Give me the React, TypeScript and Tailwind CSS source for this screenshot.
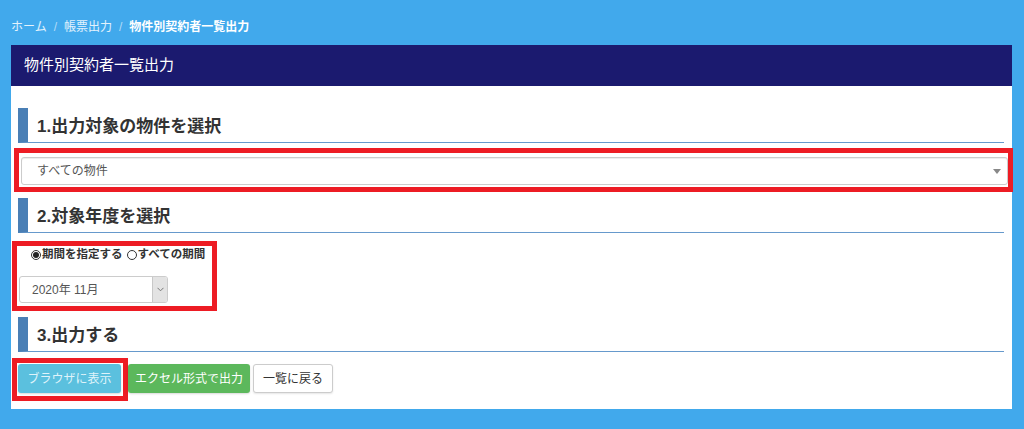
import React from 'react';

const font = "font-['Liberation_Sans','Noto_Sans_CJK_JP',sans-serif]";

const Heading: React.FC<{ children: React.ReactNode; className?: string }> = ({ children, className }) => (
  <div
    className={`h-[35px] border-l-[10px] border-l-[#4a7fb5] border-b border-b-[#6699cc] flex items-center pl-[9px] pt-[3px] text-[17px] font-bold text-[#333] ${className ?? ''}`}
  >
    {children}
  </div>
);

const Radio: React.FC<{ checked?: boolean }> = ({ checked }) => (
  <span className="w-[10px] h-[10px] rounded-full border border-[#333] flex items-center justify-center mr-[1px]">
    {checked && <span className="w-[6px] h-[6px] rounded-full bg-[#222]" />}
  </span>
);

const App: React.FC = () => {
  return (
    <div className={`w-[1024px] h-[429px] bg-[#41a9ec] pl-[11px] pr-[12px] overflow-hidden ${font}`}>
      {/* パンくず */}
      <div className="h-[45px] pt-[20px] text-[12px] leading-[14px] text-white/85 flex items-start">
        <span>ホーム</span>
        <span className="px-[7px] text-white/60">/</span>
        <span>帳票出力</span>
        <span className="px-[7px] text-white/60">/</span>
        <span className="font-bold text-white">物件別契約者一覧出力</span>
      </div>

      <div className="bg-white">
        <div className="h-[41px] bg-[#1b1a6f] flex items-center px-[13px] text-[15px] text-white">
          物件別契約者一覧出力
        </div>

        <div className="pl-[7px] pr-[8px] pt-[22px] pb-[8px]">
          <Heading>1.出力対象の物件を選択</Heading>

          <div className="mt-[5px] -ml-[4px] -mr-[9px] border-[5px] border-[#ed1c24] pt-[4px] pl-[2px] pb-[2px]">
            <div className="h-[28px] border border-[#ccc] rounded-[3px] shadow-[inset_0_1px_1px_rgba(0,0,0,0.075)] flex items-center justify-between pl-[15px] pr-[6px] text-[12px] text-[#555]">
              <span>すべての物件</span>
              <svg width="8" height="5" viewBox="0 0 8 5">
                <path d="M0 0 L8 0 L4 5 Z" fill="#888" />
              </svg>
            </div>
          </div>

          <Heading className="mt-[6px]">2.対象年度を選択</Heading>

          <div className="mt-[8px] -ml-[6px] w-[205px] border-[5px] border-[#ed1c24] pl-[2px] pt-[2px] pb-[3px]">
            <div className="h-[13px] flex items-center pl-[12px] text-[11.5px] font-bold text-[#333] leading-none">
              <Radio checked />
              <span>期間を指定する</span>
              <span className="w-[4px]" />
              <Radio />
              <span>すべての期間</span>
            </div>
            <div className="mt-[15px] w-[149px] h-[27px] border border-[#ccc] rounded-[3px] flex items-stretch overflow-hidden">
              <div className="flex-1 flex items-center pl-[12px] text-[12px] text-[#555]">2020年 11月</div>
              <div className="w-[15px] bg-[#e3e3e3] border-l border-[#c8c8c8] flex items-center justify-center">
                <svg width="7" height="5" viewBox="0 0 7 5">
                  <path d="M0.5 0.8 L3.5 3.8 L6.5 0.8" fill="none" stroke="#777" strokeWidth="1" />
                </svg>
              </div>
            </div>
          </div>

          <Heading className="mt-[6px]">3.出力する</Heading>

          <div className="mt-[6px] -ml-[6px] flex items-start">
            <div className="w-[116px] h-[43px] border-[5px] border-[#ed1c24] pl-[1px] pt-[1px]">
              <button className="w-[103px] h-[29px] rounded-[3px] bg-[#5bc0de] text-[12px] text-[#dff3fa] shadow-[0_1px_2px_rgba(0,0,0,0.15)]">
                ブラウザに表示
              </button>
            </div>
            <button className="mt-[6px] w-[122px] h-[29px] rounded-[3px] bg-[#5cb85c] text-[12px] text-white shadow-[0_1px_2px_rgba(0,0,0,0.15)]">
              エクセル形式で出力
            </button>
            <button className="mt-[6px] ml-[3px] w-[80px] h-[29px] rounded-[3px] bg-white border border-[#ccc] text-[12px] text-[#333] shadow-[0_1px_2px_rgba(0,0,0,0.1)]">
              一覧に戻る
            </button>
          </div>
        </div>
      </div>
    </div>
  );
};

export default App;
